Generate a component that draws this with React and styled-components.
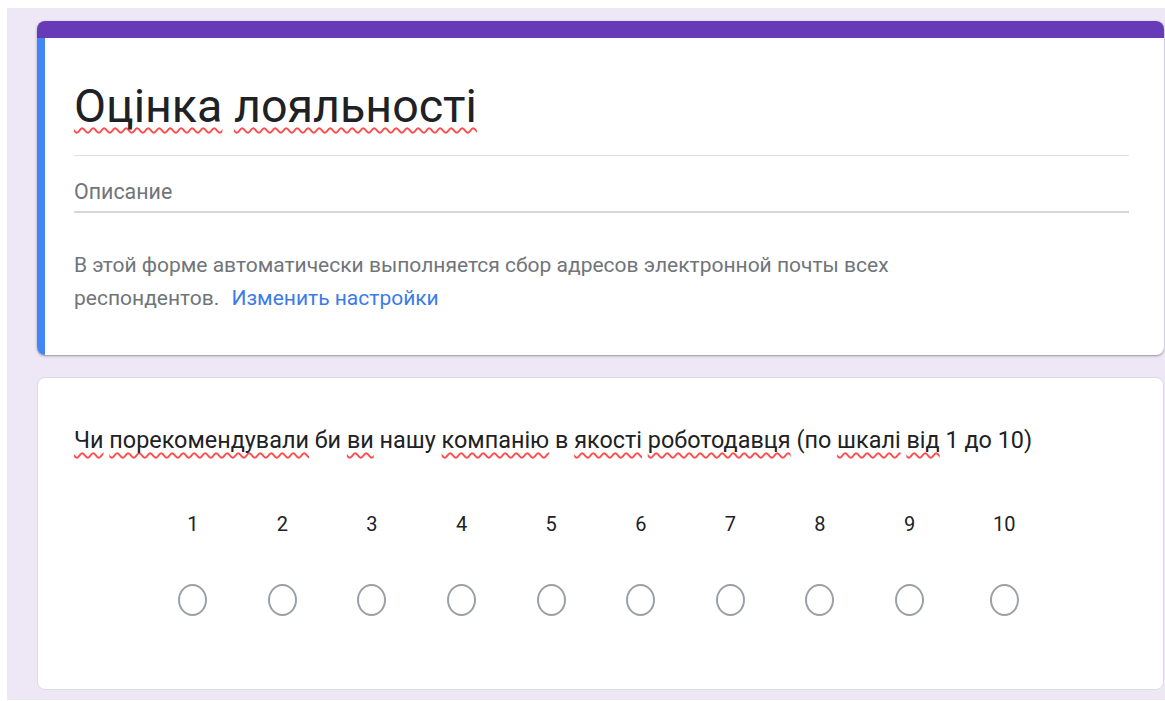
import React from "react";
import styled, { createGlobalStyle } from "styled-components";

const GlobalStyle = createGlobalStyle`
  html, body {
    margin: 0;
    padding: 0;
    background: #ffffff;
  }
  body {
    font-family: Roboto, "Noto Sans", Arial, sans-serif;
  }
`;

const Page = styled.div`
  margin: 8px 0 0 7px;
  height: 692px;
  box-sizing: border-box;
  background: #ede7f6;
  padding: 13px 1px 0 30px;
  display: flex;
  flex-direction: column;
  gap: 22px;
  overflow: hidden;
`;

const HeaderCard = styled.section`
  background: #ffffff;
  border-radius: 8px;
  overflow: hidden;
  box-shadow: 0 1px 3px rgba(60, 64, 67, 0.35), 0 1px 1px rgba(60, 64, 67, 0.2);
`;

const ThemeBand = styled.div`
  height: 17px;
  background: #673ab7;
`;

const HeaderBody = styled.div`
  border-left: 8px solid #4285f4;
  padding: 41px 35px 40px 29px;
`;

const Title = styled.h1`
  margin: 0;
  font-family: Roboto, Arial, sans-serif;
  font-weight: 400;
  font-size: 46.6px;
  line-height: 54px;
  color: #202124;
  padding-bottom: 22px;
  border-bottom: 1px solid #e0e0e0;
`;

const Description = styled.div`
  margin-top: 24px;
  font-size: 21.4px;
  line-height: 24px;
  color: #70757a;
  padding-bottom: 7px;
  border-bottom: 2px solid #d6d6d6;
`;

const Notice = styled.p`
  margin: 36px 0 0;
  font-size: 21px;
  line-height: 33px;
  color: #70757a;
`;

const Link = styled.a`
  color: #3b7be9;
  text-decoration: none;
  margin-left: 7px;
`;

const Misspelled = styled.span`
  text-decoration: underline wavy #ff4b4b;
  text-decoration-thickness: ${(p) => (p.$large ? 2 : 1.5)}px;
  text-decoration-skip-ink: none;
  text-underline-offset: ${(p) => (p.$large ? 5 : 4)}px;
`;

const QuestionCard = styled.section`
  background: #ffffff;
  border: 1px solid #dadce0;
  border-radius: 8px;
  padding: 48px 35px 73px 36px;
`;

const Question = styled.div`
  font-size: 23.4px;
  line-height: 28px;
  color: #202124;
`;

const Scale = styled.div`
  display: flex;
  margin-top: 58px;
  padding-left: 74px;
`;

const Option = styled.label`
  flex: 0 0 ${(p) => (p.$wide ? 100 : 89.6)}px;
  display: flex;
  flex-direction: column;
  align-items: center;
  gap: 48px;
  cursor: pointer;
`;

const OptionLabel = styled.span`
  font-size: 20px;
  line-height: 24px;
  color: #202124;
`;

const Radio = styled.span`
  width: 25px;
  height: 28px;
  border: 2px solid #9aa0a6;
  border-radius: 50%;
`;

const words = (text, flagged) =>
  text.split(" ").map((w, i, arr) => (
    <React.Fragment key={i}>
      {flagged.includes(w) ? <Misspelled>{w}</Misspelled> : w}
      {i < arr.length - 1 ? " " : ""}
    </React.Fragment>
  ));

const QUESTION =
  "Чи порекомендували би ви нашу компанію в якості роботодавця (по шкалі від 1 до 10)";
const FLAGGED = ["Чи", "порекомендували", "ви", "компанію", "якості", "роботодавця", "шкалі", "від"];

export default function App() {
  const options = Array.from({ length: 10 }, (_, i) => String(i + 1));
  return (
    <>
      <GlobalStyle />
      <Page>
        <HeaderCard>
          <ThemeBand />
          <HeaderBody>
            <Title>
              <Misspelled $large>Оцінка</Misspelled> <Misspelled $large>лояльності</Misspelled>
            </Title>
            <Description>Описание</Description>
            <Notice>
              В этой форме автоматически выполняется сбор адресов электронной почты всех
              <br />
              респондентов. <Link href="#">Изменить настройки</Link>
            </Notice>
          </HeaderBody>
        </HeaderCard>
        <QuestionCard>
          <Question>{words(QUESTION, FLAGGED)}</Question>
          <Scale>
            {options.map((n) => (
              <Option key={n} $wide={n.length > 1}>
                <OptionLabel>{n}</OptionLabel>
                <Radio />
              </Option>
            ))}
          </Scale>
        </QuestionCard>
      </Page>
    </>
  );
}
